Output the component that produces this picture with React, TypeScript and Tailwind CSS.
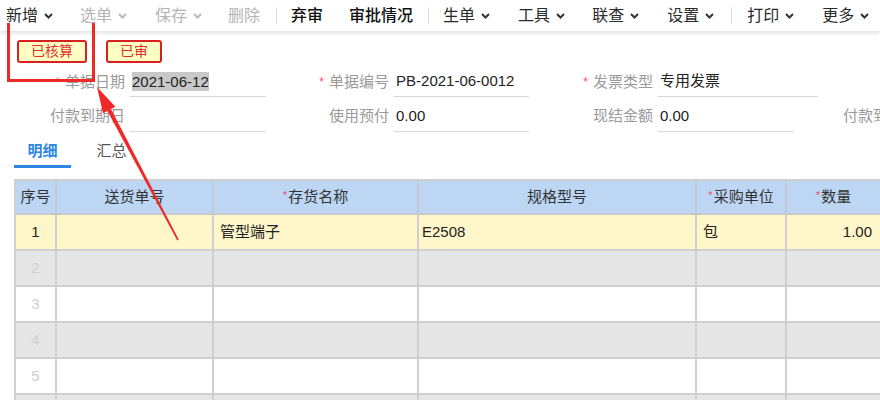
import React from "react";

const Caret = ({ dim }: { dim?: boolean }) => (
  <svg width="9" height="6" viewBox="0 0 9 6" className="ml-[6px]">
    <path d="M1 1 L4.5 4.5 L8 1" fill="none" stroke={dim ? "#b8b8b8" : "#333"} strokeWidth="2" />
  </svg>
);

type TItem = { t: string; caret?: boolean; dim?: boolean; bold?: boolean; ml: string } | { sep: true; ml: string };

const items: TItem[] = [
  { t: "新增", caret: true, ml: "ml-[6px]" },
  { t: "选单", caret: true, dim: true, ml: "ml-[27px]" },
  { t: "保存", caret: true, dim: true, ml: "ml-[28px]" },
  { t: "删除", dim: true, ml: "ml-[26px]" },
  { sep: true, ml: "ml-[16px]" },
  { t: "弃审", bold: true, ml: "ml-[14px]" },
  { t: "审批情况", bold: true, ml: "ml-[26px]" },
  { sep: true, ml: "ml-[15px]" },
  { t: "生单", caret: true, ml: "ml-[14px]" },
  { t: "工具", caret: true, ml: "ml-[28px]" },
  { t: "联查", caret: true, ml: "ml-[27px]" },
  { t: "设置", caret: true, ml: "ml-[28px]" },
  { sep: true, ml: "ml-[17px]" },
  { t: "打印", caret: true, ml: "ml-[15px]" },
  { t: "更多", caret: true, ml: "ml-[28px]" },
];

const Field = ({
  label,
  star,
  paleStar,
  value,
  valueW = "w-[136px]",
  highlight,
  noLine,
}: {
  label: string;
  star?: boolean;
  paleStar?: boolean;
  value?: string;
  valueW?: string;
  highlight?: boolean;
  noLine?: boolean;
}) => (
  <div className="flex h-full shrink-0">
    <div className="w-[124px] flex items-center justify-end text-[15px] text-[#9a9a9a] whitespace-nowrap">
      {star && <span className={`${paleStar ? "text-[#c9a0a8]" : "text-[#f0506e]"} text-[12px] mr-[5px]`}>*</span>}
      {label}
    </div>
    <div className={`${valueW} ml-[5px] flex items-center ${noLine ? "" : "border-b border-[#d8d8d8]"} pl-[2px] text-[15px] text-[#222]`}>
      {highlight ? <span className="bg-[#c8c8c8] leading-[19px]">{value}</span> : value}
    </div>
  </div>
);

const cols = [
  { w: "w-[41px]", h: "序号" },
  { w: "w-[157px]", h: "送货单号" },
  { w: "w-[205px]", h: "存货名称", star: true },
  { w: "w-[278px]", h: "规格型号" },
  { w: "w-[90px]", h: "采购单位", star: true },
  { w: "w-[95px]", h: "数量", star: true },
  { w: "w-[120px]", h: "" },
];

export default function App() {
  const rows = [1, 2, 3, 4, 5, 6];
  return (
    <div className="relative w-[880px] h-[400px] overflow-hidden bg-white font-['Liberation_Sans','Noto_Sans_CJK_SC',sans-serif]">
      {/* toolbar */}
      <div className="relative z-[1] h-[31px] bg-white shadow-[0_2px_4px_rgba(0,0,0,0.13)] flex items-center">
        {items.map((it, i) =>
          "sep" in it ? (
            <div key={i} className={`${it.ml} w-px h-[17px] bg-[#dcdcdc]`} />
          ) : (
            <div key={i} className={`${it.ml} flex items-center text-[16px] whitespace-nowrap ${it.dim ? "text-[#b4b4b4]" : "text-[#2a2a2a]"} ${it.bold ? "font-medium text-[#111]" : ""}`}>
              {it.t}
              {it.caret && <Caret dim={it.dim} />}
            </div>
          )
        )}
      </div>

      {/* badges */}
      <div className="flex mt-[9px] h-[23px]">
        <div className="ml-[17px] px-[12px] border-2 border-[#d92020] bg-[#ffffc4] rounded-[3px] text-[14px] text-[#e03030] flex items-center">已核算</div>
        <div className="ml-[19px] px-[12px] border-2 border-[#d92020] bg-[#ffffc4] rounded-[3px] text-[14px] text-[#e03030] flex items-center">已审</div>
      </div>

      {/* form */}
      <div className="flex mt-[4px] h-[30px] pl-[1px]">
        <div className="w-[265px] h-full"><Field label="单据日期" star paleStar value="2021-06-12" highlight /></div>
        <div className="w-[263px] h-full"><Field label="单据编号" star value="PB-2021-06-0012" /></div>
        <div className="w-[300px] h-full"><Field label="发票类型" star value="专用发票" valueW="w-[160px]" /></div>
      </div>
      <div className="flex mt-[4px] h-[31px] pl-[1px]">
        <div className="w-[265px] h-full"><Field label="付款到期日" /></div>
        <div className="w-[263px] h-full"><Field label="使用预付" value="0.00" /></div>
        <div className="w-[265px] h-full"><Field label="现结金额" value="0.00" /></div>
        <div className="w-[265px] h-full"><Field label="付款到期日" noLine /></div>
      </div>

      {/* tabs */}
      <div className="flex mt-[5px] h-[31px] ml-[14px]">
        <div className="w-[57px] border-b-[3px] border-[#2d86e6] flex items-center justify-center text-[15px] font-bold text-[#2d86e6]">明细</div>
        <div className="w-[57px] ml-[12px] flex items-center justify-center text-[15px] text-[#555] pb-[3px]">汇总</div>
      </div>

      {/* table */}
      <div className="mt-[11px] ml-[14px] w-[1000px] border-l-2 border-t-2 border-[#d0d0d0]">
        <div className="flex h-[34px] bg-[#bcd6f4]">
          {cols.map((c, i) => (
            <div key={i} className={`${c.w} shrink-0 border-r-2 border-b-2 border-[#c6c9cf] flex items-center justify-center text-[15px] text-[#333]`}>
              {c.star && <span className="text-[#f0506e] text-[11px] self-start mt-[6px] mr-[1px]">*</span>}
              {c.h}
            </div>
          ))}
        </div>
        {rows.map((r) => {
          const bg = r === 1 ? "bg-[#fff6c9]" : r % 2 === 0 ? "bg-[#e6e6e6]" : "bg-white";
          return (
            <div key={r} className={`flex h-[36px] ${bg}`}>
              {cols.map((c, i) => {
                let content: React.ReactNode = null;
                let align = "justify-start pl-[6px]";
                if (i === 0) {
                  content = r;
                  align = "justify-center";
                }
                if (r === 1) {
                  if (i === 2) content = "管型端子";
                  if (i === 3) {
                    content = "E2508";
                    align = "justify-start pl-[3px]";
                  }
                  if (i === 4) content = "包";
                  if (i === 5) {
                    content = "1.00";
                    align = "justify-end pr-[8px]";
                  }
                }
                const color = i === 0 && r !== 1 ? "text-[#cfcfcf]" : "text-[#222]";
                return (
                  <div key={i} className={`${c.w} shrink-0 border-r-2 border-b-2 border-[#d0d0d0] flex items-center ${align} text-[15px] ${color}`}>
                    {content}
                  </div>
                );
              })}
            </div>
          );
        })}
      </div>

      {/* annotation box */}
      <div className="absolute z-[5] left-[7px] top-[23px] w-[88px] h-[59px] border-[3px] border-t-0 border-[#f02828]" />

      {/* arrow */}
      <svg className="absolute z-[5] left-0 top-0 pointer-events-none" width="880" height="400">
        <polygon points="178.7,239.6 177.3,240.4 107.4,110.9 111.0,109.1" fill="#f02828" />
        <polygon points="97,87 115.4,106.7 103.0,113.3" fill="#f02828" />
      </svg>
    </div>
  );
}
